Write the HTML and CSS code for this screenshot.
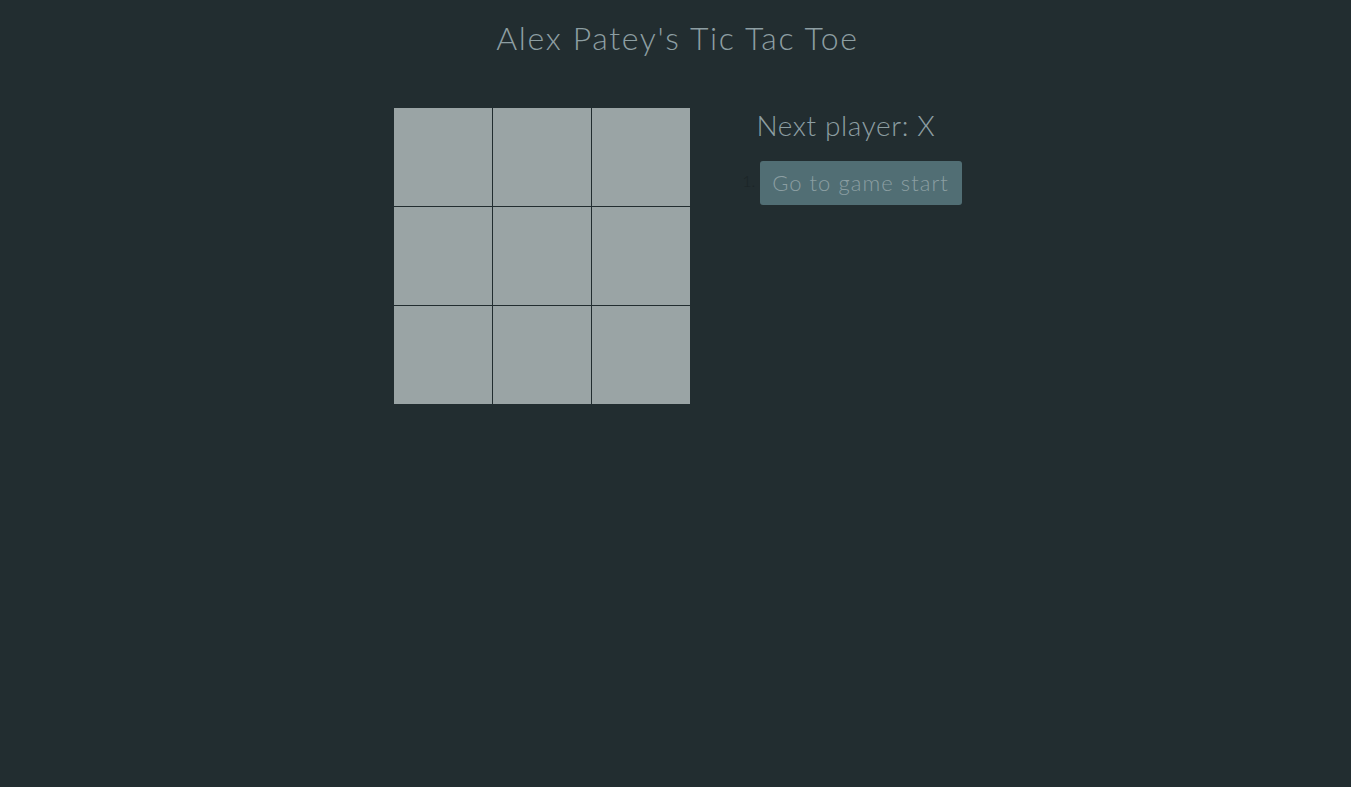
FILE: index.html
```html
<!DOCTYPE html>
<html>
<head>
<meta charset="utf-8">
<link rel="stylesheet" href="styles.css">
</head>
<body>
<h1 class="title">Alex Patey's Tic Tac Toe</h1>
<div class="game">
  <div class="board">
    <button class="square"></button><button class="square"></button><button class="square"></button>
    <button class="square"></button><button class="square"></button><button class="square"></button>
    <button class="square"></button><button class="square"></button><button class="square"></button>
  </div>
  <div class="info">
    <div class="status">Next player: X</div>
    <ol class="moves">
      <li><button class="move">Go to game start</button></li>
    </ol>
  </div>
</div>
</body>
</html>
```
FILE: styles.css
```css
html, body {
  margin: 0;
  padding: 0;
  background: #222d30;
  height: 100%;
}
body {
  font-family: "Lato", "Open Sans", sans-serif;
  font-weight: 300;
  color: #8d9ea2;
}
.title {
  margin: 0;
  padding-top: 18px;
  padding-left: 4px;
  font-size: 32px;
  font-weight: 300;
  letter-spacing: 1.65px;
  text-align: center;
  line-height: 40px;
}
.game {
  display: flex;
  justify-content: center;
  gap: 66px;
  margin-top: 49px;
  padding-left: 4px;
}
.board {
  display: grid;
  grid-template-columns: 100px 99px 99px;
  grid-template-rows: 100px 99px 99px;
  margin: 0 -1px -1px -1px;
}
.board .square {
  margin: -1px 0 0 -1px;
  width: 100px;
  height: 100px;
  padding: 0;
  border: 1px solid #222d30;
  background: #9aa4a5;
}
.board .square:nth-child(3n+1) { margin-left: 0; }
.board .square:nth-child(-n+3) { margin-top: 0; }
.info {
  display: flex;
  flex-direction: column;
}
.status {
  font-size: 28px;
  line-height: 34px;
  margin-top: 1px;
  padding-left: 1px;
  letter-spacing: 0.6px;
}
.moves {
  margin: 19px 0 0 0;
  padding-left: 4px;
}
.moves li {
  color: #1b2426;
  font-size: 16px;
}
.moves li::marker {
  color: #1b2426;
}
.move {
  vertical-align: middle;
  width: 202px;
  height: 44px;
  border: none;
  border-radius: 3px;
  background: #516e74;
  color: #8b9ea2;
  font-family: inherit;
  font-weight: 300;
  font-size: 22px;
  letter-spacing: 1.05px;
  padding: 0 0 2px 0;
}
```
